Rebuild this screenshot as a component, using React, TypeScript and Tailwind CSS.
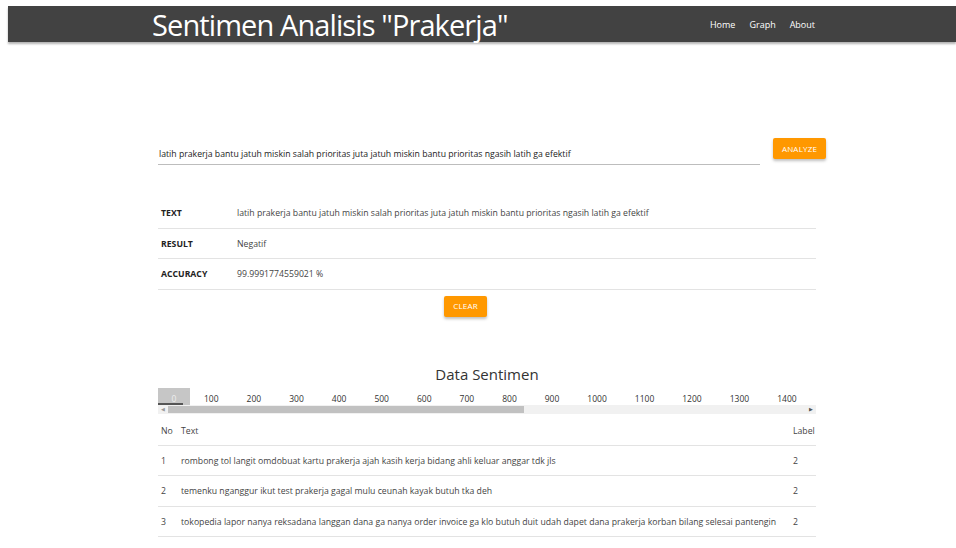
import React from "react";

const INPUT_TEXT =
  "latih prakerja bantu jatuh miskin salah prioritas juta jatuh miskin bantu prioritas ngasih latih ga efektif";

const TABS = ["0", "100", "200", "300", "400", "500", "600", "700", "800", "900", "1000", "1100", "1200", "1300", "1400"];

const ROWS = [
  { no: 1, text: "rombong tol langit omdobuat kartu prakerja ajah kasih kerja bidang ahli keluar anggar tdk jls", label: 2 },
  { no: 2, text: "temenku nganggur ikut test prakerja gagal mulu ceunah kayak butuh tka deh", label: 2 },
  {
    no: 3,
    text: "tokopedia lapor nanya reksadana langgan dana ga nanya order invoice ga klo butuh duit udah dapet dana prakerja korban bilang selesai pantengin",
    label: 2,
  },
];

function OrangeButton({ children, className = "" }: { children: React.ReactNode; className?: string }) {
  return (
    <button
      className={
        "bg-[#ff9800] text-white text-[8px] uppercase tracking-[0.2px] rounded-[2px] shadow-[0_2px_3px_rgba(0,0,0,0.25)] flex items-center justify-center " +
        className
      }
    >
      {children}
    </button>
  );
}

export default function App() {
  return (
    <div className="w-[956px] h-[548px] overflow-hidden bg-white text-[#333] [font-family:'Open_Sans',sans-serif]">
      <div className="pl-2 pt-[6px]">
        <header className="h-[36px] bg-[#424242] shadow-[0_2px_2px_rgba(0,0,0,0.3)] flex items-center">
          <h1 className="ml-[144px] text-white text-[29px] leading-none tracking-[-0.9px]">
            Sentimen Analisis "Prakerja"
          </h1>
          <nav className="ml-auto mr-[141px] flex gap-[14px] text-white text-[9px] leading-none">
            <span>Home</span>
            <span>Graph</span>
            <span>About</span>
          </nav>
        </header>
      </div>

      <main className="pl-[158px] text-[8.7px] leading-none">
        {/* query input and analyze button */}
        <div className="mt-[96px] flex items-start w-[668px]">
          <div className="w-[602px] h-[27px] border-b border-[#bdbdbd] flex items-end pb-[5px] pl-[1px] text-[#222] whitespace-nowrap">
            {INPUT_TEXT}
          </div>
          <OrangeButton className="ml-[13px] w-[53px] h-[21px]">Analyze</OrangeButton>
        </div>

        {/* analysis result */}
        <div className="mt-[33px] w-[658px]">
          {[
            ["TEXT", INPUT_TEXT],
            ["RESULT", "Negatif"],
            ["ACCURACY", "99.9991774559021 %"],
          ].map(([k, v]) => (
            <div key={k} className="h-[30.5px] pt-[2px] border-b border-[#e3e3e3] flex items-center">
              <div className="w-[79px] pl-[3px] font-bold text-[#222]">{k}</div>
              <div className="text-[#444] whitespace-nowrap">{v}</div>
            </div>
          ))}
        </div>
        <div className="w-[615px] flex justify-center mt-[6px]">
          <OrangeButton className="w-[43px] h-[21px]">Clear</OrangeButton>
        </div>

        {/* data table */}
        <div className="w-[658px] mt-[50px]">
          <h2 className="text-center text-[15px] leading-none text-[#333]">Data Sentimen</h2>
          <div className="mt-[6px]">
            <div className="flex items-end h-[17px] text-[8.5px] leading-none text-[#333] overflow-hidden">
              {TABS.map((t, i) => (
                <div
                  key={t}
                  className={
                    i === 0
                      ? "relative shrink-0 h-[17px] w-[32px] bg-[#c6c6c6] text-[#eee] flex items-end justify-center pb-[1px]"
                      : "shrink-0 px-[14px] pb-[1px]"
                  }
                >
                  {t}
                  {i === 0 && <div className="absolute left-0 bottom-0 w-[25px] h-[2px] bg-[#555]" />}
                </div>
              ))}
            </div>
            <div className="h-[9px] bg-[#f1f1f1] flex items-center">
              <span className="w-[10px] text-[5px] text-[#999] text-center leading-none">◀</span>
              <div className="w-[356px] h-[7px] bg-[#c1c1c1]" />
              <div className="flex-1" />
              <span className="w-[10px] text-[5px] text-[#555] text-center leading-none">▶</span>
            </div>
          </div>

          <div className="mt-[1px] text-[#444]">
            <div className="h-[31px] pt-[3px] border-b border-[#e3e3e3] flex items-center">
              <div className="w-[23px] pl-[3px]">No</div>
              <div className="flex-1">Text</div>
              <div className="w-[23px]">Label</div>
            </div>
            {ROWS.map((r) => (
              <div key={r.no} className="h-[30.5px] pt-[2px] border-b border-[#e3e3e3] flex items-center">
                <div className="w-[23px] pl-[3px]">{r.no}</div>
                <div className="flex-1 whitespace-nowrap">{r.text}</div>
                <div className="w-[23px]">{r.label}</div>
              </div>
            ))}
          </div>
        </div>
      </main>
    </div>
  );
}
